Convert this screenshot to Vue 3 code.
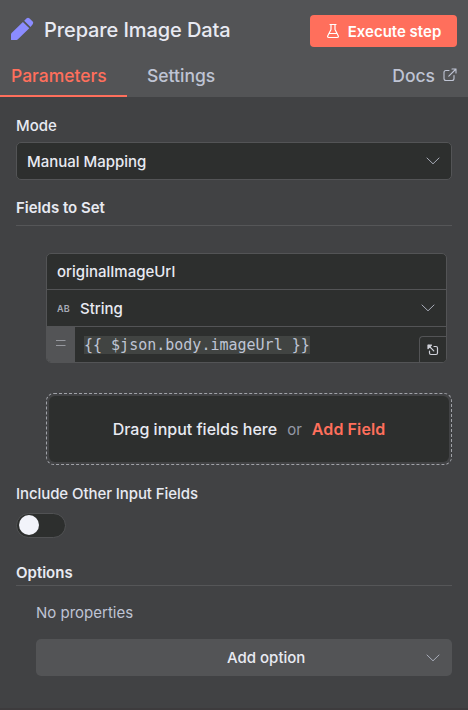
<script setup>
import { ref } from 'vue'

const tab = ref('Parameters')
const tabs = ['Parameters', 'Settings']
const fieldName = ref('originalImageUrl')
const includeOthers = ref(false)
</script>

<template>
  <div class="panel">
    <header class="header">
      <div class="title-row">
        <svg class="pencil" width="24" height="24" viewBox="0 0 24 24">
          <path d="M1 22.400V17.400Q1 16.600 1.600 16L12.900 4.900 19.300 11.200 7.900 22.300Q7.300 22.900 6.500 22.900H1.500Q1 22.900 1 22.400Z M14.200 3.700 16.700 1.200Q18 .2 19.300 1.200L22.700 4.600Q23.800 5.900 22.700 7.300L20.500 9.900Z" />
        </svg>
        <h1 class="title">Prepare Image Data</h1>
        <button class="execute">
          <svg width="14" height="16" viewBox="0 0 14 16">
            <path d="M4 1.500h6M5 1.500v5L1.800 12.700Q1.100 14.500 2.800 14.500h8.400q1.700 0 1-1.800L9 6.500v-5M3.300 10.500h7.400" />
          </svg>
          <span>Execute step</span>
        </button>
      </div>
      <nav class="tabs">
        <a v-for="t in tabs" :key="t" class="tab" :class="{ active: t === tab }" @click="tab = t">{{ t }}</a>
        <a class="docs">
          <span>Docs</span>
          <svg width="14" height="14" viewBox="0 0 14 14">
            <path d="M6 2.500H3Q1 2.500 1 4.500V10.500Q1 12.500 3 12.500H9Q11 12.500 11 10.500V7.500M9 1h4v4M13 1 5.800 8.200" />
          </svg>
        </a>
      </nav>
    </header>

    <main class="body">
      <label class="label mode-label">Mode</label>
      <div class="select">
        <span class="manual">Manual Mapping</span>
        <svg class="chevron" width="14" height="8" viewBox="0 0 14 8"><path d="M1 1l6 5.800L13 1" /></svg>
      </div>

      <h2 class="section fields-title">Fields to Set</h2>

      <div class="assignment">
        <div class="row name"><span>{{ fieldName }}</span></div>
        <div class="row type">
          <span class="ab">AB</span>
          <span class="string">String</span>
          <svg class="chevron" width="14" height="8" viewBox="0 0 14 8"><path d="M1 1l6 5.800L13 1" /></svg>
        </div>
        <div class="row value">
          <div class="equals"><svg width="10" height="8" viewBox="0 0 10 8"><path d="M0 1.500h9.500M0 6.500h9.500" /></svg></div>
          <code class="expression" v-text="'{{ $json.body.imageUrl }}'"></code>
          <button class="expand">
            <svg width="12" height="12" viewBox="0 0 12 12">
              <path d="M7 2.500H9Q10.500 2.500 10.500 4V9Q10.500 10.500 9 10.500H4Q2.500 10.500 2.500 9V7M1.500 1.500 6.800 6.800" />
              <path class="head" d="M1 1H4.500L1 4.500Z" />
            </svg>
          </button>
        </div>
      </div>

      <div class="drop">
        <div class="drop-inner">
          <span class="drag">Drag input fields here</span>
          <span class="or">or</span>
          <a class="add-field">Add Field</a>
        </div>
      </div>

      <label class="label include-label">Include Other Input Fields</label>
      <div class="switch" :class="{ on: includeOthers }" @click="includeOthers = !includeOthers">
        <span class="knob"></span>
      </div>

      <h2 class="section options-title">Options</h2>
      <p class="empty">No properties</p>
      <button class="add-option">
        <span>Add option</span>
        <svg class="chevron" width="14" height="8" viewBox="0 0 14 8"><path d="M1 1l6 5.800L13 1" /></svg>
      </button>
    </main>
  </div>
</template>

<style>
body { background: #414244; }
</style>

<style scoped>
* { box-sizing: border-box; }
.panel {
  height: 710px;
  background: #414244;
  border-bottom: 2px solid #3d3b3d;
  font-family: Inter, "Liberation Sans", sans-serif;
  color: #e8eaf2;
  overflow: hidden;
  white-space: nowrap;
}
button { font: inherit; color: inherit; border: 0; padding: 0; }
svg { flex: none; fill: none; stroke-linecap: round; stroke-linejoin: round; }
h1, h2, p { margin: 0; }
.header { height: 97px; background: #535456; display: flex; flex-direction: column; }
.title-row { height: 47px; margin-top: 7px; display: flex; align-items: center; padding: 0 11px 0 10px; }
.pencil { fill: #8b8cff; margin-top: -3px; }
.title { font-size: 20px; font-weight: 500; line-height: 24px; letter-spacing: -0.1px; margin: -2px 0 0 10px; }
.execute {
  margin-left: auto; width: 147px; height: 32px; border-radius: 4px; background: #ff6f5c; color: #fff;
  display: flex; align-items: center; justify-content: center; gap: 8px; font-size: 15px; font-weight: 600;
}
.execute span { padding-top: 1px; }
.execute svg { stroke: #fff; stroke-width: 1.200; }
.tabs { height: 43px; display: flex; font-size: 17.5px; font-weight: 500; line-height: 44px; color: #bfc4d4; }
.tab { padding: 0 20px; }
.tab:first-child { padding: 0 20px 0 11px; width: 127px; }
.tab.active { color: #ff6f5c; border-bottom: 2px solid #ff6f5c; }
.docs { margin-left: auto; display: flex; align-items: center; gap: 8px; padding-right: 11px; }
.docs svg { stroke: #bfc4d4; stroke-width: 1.100; margin-top: -2px; }
.body { padding: 18px 16px 0; display: flex; flex-direction: column; }
.label { font-size: 15px; font-weight: 500; line-height: 22px; }
.select {
  height: 38px; margin-top: 5px; border: 1px solid #535456; border-radius: 5px; background: #2d2f2e;
  display: flex; align-items: center; padding: 0 11px 0 10px; font-size: 15px; font-weight: 500;
}
.chevron { margin-left: auto; stroke: #a9adb9; stroke-width: 1; }
.section { font-size: 15px; font-weight: 600; line-height: 22px; border-bottom: 1px solid #555658; }
.fields-title { height: 29px; margin-top: 17px; }
.assignment {
  width: 401px; height: 110px; margin: 27px 0 0 30px; border: 1px solid #535456; border-radius: 5px;
  background: #2d2f2e; overflow: hidden; font-size: 15px; font-weight: 500;
}
.row { height: 37px; display: flex; align-items: center; border-bottom: 1px solid #535456; }
.name { height: 36px; padding-left: 10px; }
.type { padding: 0 11px 0 10px; }
.ab { width: 23px; font-size: 9px; font-weight: 600; letter-spacing: 0.3px; color: #a9adb9; }
.value { height: 35px; border: 0; align-items: stretch; }
.equals { width: 28px; background: #535456; padding: 12px 0 0 9px; }
.equals svg { display: block; stroke: #96989e; stroke-width: 1.100; stroke-linecap: butt; }
.expression {
  align-self: flex-start; margin: 9px 0 0 9px; background: #414442; color: #bfc4d4; line-height: 18px;
  font-family: "DejaVu Sans Mono", "Liberation Mono", monospace; font-size: 15px; font-weight: 400;
}
.expand {
  width: 27px; height: 26px; margin: 9px 0 0 auto; border: solid #535456; border-width: 1px 0 0 1px;
  border-radius: 4px 0 0 0; background: #2d2f2e; display: grid; place-items: center;
}
.expand svg { stroke: #d0d2da; stroke-width: 1.200; }
.expand .head { fill: #d0d2da; }
.drop { width: 406px; height: 72px; margin: 30px 0 0 30px; border: 1px dashed #a0a2a8; border-radius: 8px; padding: 2px; }
.drop-inner { height: 100%; border-radius: 6px; background: #2d2f2e; display: flex; align-items: center; justify-content: center; font-size: 16px; font-weight: 500; gap: 10px; }
.or { color: #9499a6; font-size: 15px; font-weight: 400; }
.add-field { color: #ff6f5c; font-weight: 600; letter-spacing: 0.1px; }
.include-label { margin-top: 18px; letter-spacing: -0.08px; }
.switch { width: 50px; height: 25px; margin-top: 8px; border: 1px solid #515254; border-radius: 13px; background: #2d2f2e; padding: 1px 2px; }
.knob { display: block; width: 20px; height: 20px; border-radius: 50%; background: #f2f3fa; }
.switch.on .knob { margin-left: auto; }
.options-title { height: 24px; margin-top: 24px; }
.empty { font-size: 15px; line-height: 22px; margin: 16px 0 0 20px; color: #bfc4d4; }
.add-option {
  height: 37px; margin: 15px 0 0 20px; border-radius: 5px; background: #535456;
  display: flex; align-items: center; font-size: 15px; font-weight: 500; padding: 0 12px 0 191px;
}
</style>
